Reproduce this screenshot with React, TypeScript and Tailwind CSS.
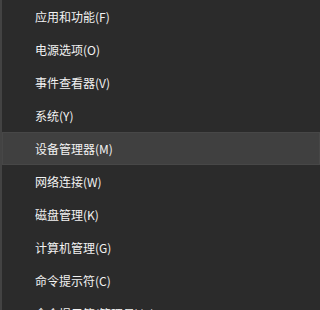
const items = [
  '应用和功能(F)',
  '电源选项(O)',
  '事件查看器(V)',
  '系统(Y)',
  '设备管理器(M)',
  '网络连接(W)',
  '磁盘管理(K)',
  '计算机管理(G)',
  '命令提示符(C)',
  '命令提示符(管理员)(A)',
];

export default function App() {
  return (
    <div className="h-[310px] w-full min-w-[229px] overflow-hidden bg-[#2b2b2b] flex">
      <div className="w-[2px] shrink-0 bg-[#434343]" />
      <ul
        className="flex-1 text-[12px] text-[#f2f2f2]"
        style={{ fontFamily: '"Noto Sans CJK SC", "Noto Sans", sans-serif' }}
      >
        {items.map((label, i) => (
          <li
            key={label}
            className={`h-[33px] flex items-center whitespace-nowrap ${
              i === 4 ? 'bg-[#404040] border border-[#474747] pl-[32px]' : 'pl-[33px]'
            }`}
          >
            {label}
          </li>
        ))}
      </ul>
    </div>
  );
}
